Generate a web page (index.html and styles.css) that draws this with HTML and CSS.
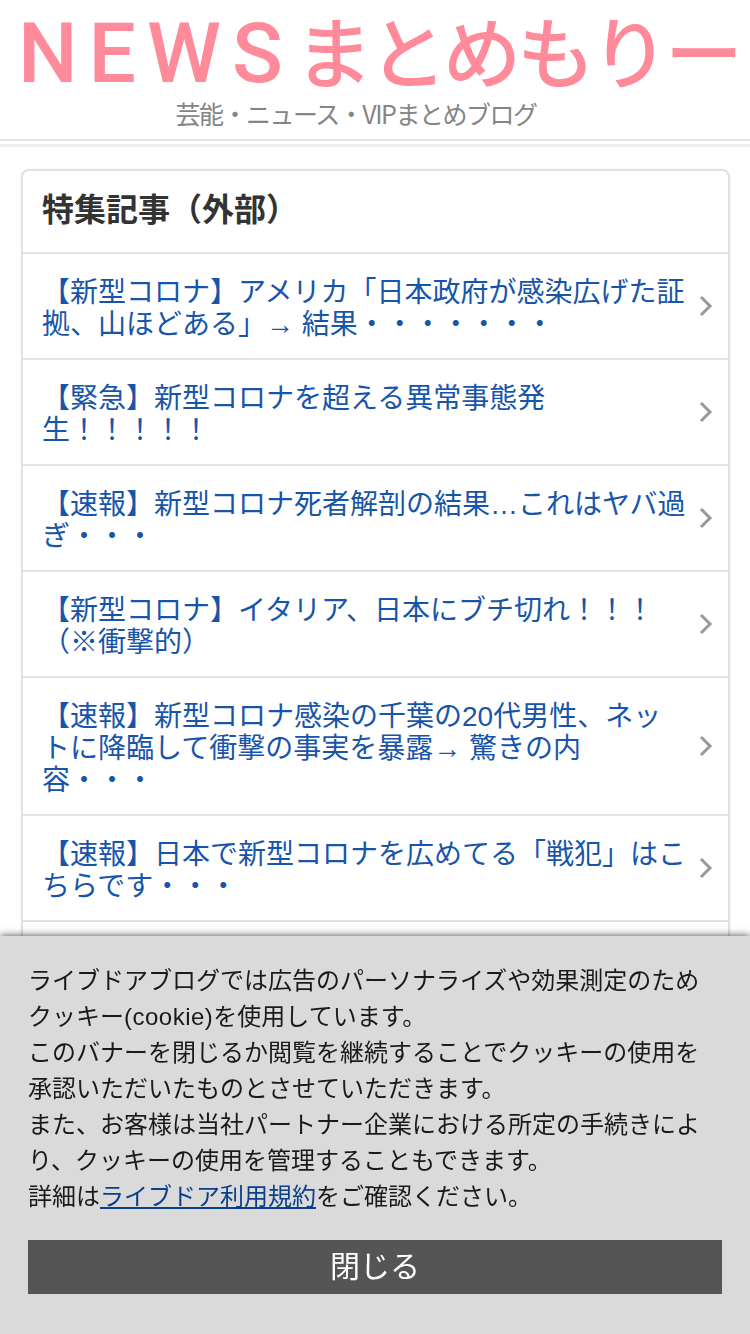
FILE: index.html
```html
<!DOCTYPE html>
<html lang="ja">
<head>
<meta charset="utf-8">
<title>NEWSまとめもりー</title>
<link rel="stylesheet" href="styles.css">
</head>
<body>
<header class="site-header">
  <div class="logo"><span class="logo-latin">NEWS</span><span class="logo-kana">まとめもりー</span></div>
  <div class="tagline">芸能・ニュース・VIPまとめブログ</div>
</header>
<main class="card">
  <h2 class="card-title">特集記事（外部）</h2>
  <ul class="list">
    <li class="row"><a class="row-link" href="#">【新型コロナ】アメリカ「日本政府が感染広げた証拠、山ほどある」→ 結果・・・・・・・</a><svg class="chev" viewBox="0 0 14 22"><path d="M2 2l9 9-9 9"/></svg></li>
    <li class="row"><a class="row-link" href="#">【緊急】新型コロナを超える異常事態発生！！！！！</a><svg class="chev" viewBox="0 0 14 22"><path d="M2 2l9 9-9 9"/></svg></li>
    <li class="row"><a class="row-link" href="#">【速報】新型コロナ死者解剖の結果…これはヤバ過ぎ・・・</a><svg class="chev" viewBox="0 0 14 22"><path d="M2 2l9 9-9 9"/></svg></li>
    <li class="row"><a class="row-link" href="#">【新型コロナ】イタリア、日本にブチ切れ！！！（※衝撃的）</a><svg class="chev" viewBox="0 0 14 22"><path d="M2 2l9 9-9 9"/></svg></li>
    <li class="row row-tall"><a class="row-link" href="#">【速報】新型コロナ感染の千葉の20代男性、ネットに降臨して衝撃の事実を暴露→ 驚きの内容・・・</a><svg class="chev" viewBox="0 0 14 22"><path d="M2 2l9 9-9 9"/></svg></li>
    <li class="row"><a class="row-link" href="#">【速報】日本で新型コロナを広めてる「戦犯」はこちらです・・・</a><svg class="chev" viewBox="0 0 14 22"><path d="M2 2l9 9-9 9"/></svg></li>
    <li class="row"></li>
  </ul>
</main>
<aside class="cookie">
  <p class="cookie-text">ライブドアブログでは広告のパーソナライズや効果測定のためクッキー<span class="cookie-latin">(cookie)</span>を使用しています。<br>このバナーを閉じるか閲覧を継続することでクッキーの使用を承認いただいたものとさせていただきます。<br>また、お客様は当社パートナー企業における所定の手続きにより、クッキーの使用を管理することもできます。<br>詳細は<a class="cookie-link" href="#">ライブドア利用規約</a>をご確認ください。</p>
  <div class="cookie-close">閉じる</div>
</aside>
</body>
</html>
```
FILE: styles.css
```css
* { box-sizing: border-box; }
html, body { margin: 0; padding: 0; height: 1334px; overflow: hidden; background: #fff; }
body { font-family: "Liberation Sans", "Noto Sans CJK JP", sans-serif; color: #333; }

.site-header {
  height: 147px;
  padding-top: 11px;
  border-bottom: 3px solid #eee;
  position: relative;
}
.site-header::after {
  content: "";
  display: block;
  position: absolute;
  left: 0; right: 0; bottom: 3px;
  height: 2px;
  background: #e4e4e4;
}
.logo {
  display: flex;
  align-items: center;
  height: 85px;
  padding-left: 18px;
  color: #ff8a9a;
  white-space: nowrap;
  filter: blur(0.5px);
}
.logo-latin {
  font-family: "Roboto", sans-serif;
  font-weight: 500;
  font-size: 84px;
  line-height: 85px;
  letter-spacing: 11px;
  width: 277px;
}
.logo-kana {
  font-family: "Noto Sans CJK JP", sans-serif;
  font-weight: 500;
  font-size: 78px;
  line-height: 76px;
  letter-spacing: -4px;
  margin-bottom: 10px;
}
.tagline {
  font-family: "Noto Sans CJK JP", sans-serif;
  text-align: center;
  font-size: 25px;
  line-height: 28px;
  letter-spacing: -1.5px;
  color: #858585;
  margin: 3px 0 0 -19px;
  padding-right: 19px;
}

.card {
  margin: 22px 20px 0 21px;
  border: 2px solid #e2e2e2;
  border-radius: 8px;
  background: #fff;
  box-shadow: 0 0 2px rgba(0,0,0,.08);
}
.card-title {
  margin: 0;
  height: 83px;
  padding: 0 19px;
  font-size: 32px;
  line-height: 79px;
  font-weight: 700;
  color: #333;
  border-bottom: 2px solid #e2e2e2;
}
.list { list-style: none; margin: 0; padding: 0; }
.row {
  height: 106px;
  display: flex;
  align-items: center;
  padding: 0 15px 0 19px;
  border-bottom: 2px solid #e2e2e2;
}
.row-tall { height: 138px; }
.row-link {
  flex: 1;
  font-size: 28px;
  line-height: 32px;
  color: #1755ab;
  text-decoration: none;
  padding: 6px 11px 0 0;
}
.chev { width: 14px; height: 22px; flex: none; }
.chev path { fill: none; stroke: #999; stroke-width: 3; }

.cookie {
  position: fixed;
  left: 0; right: 0; bottom: 0;
  height: 398px;
  padding: 27px 28px 0;
  background: #dadada;
  box-shadow: 0 0 8px rgba(0,0,0,.75);
}
.cookie-text {
  margin: 0;
  font-size: 24px;
  line-height: 36px;
  color: #1a1a1a;
}
.cookie-latin { letter-spacing: .5px; }
.cookie-link { color: #0a3f8c; text-decoration: underline; }
.cookie-close {
  margin-top: 25px;
  height: 54px;
  background: #555;
  color: #fff;
  text-align: center;
  font-size: 30px;
  line-height: 54px;
}
```
